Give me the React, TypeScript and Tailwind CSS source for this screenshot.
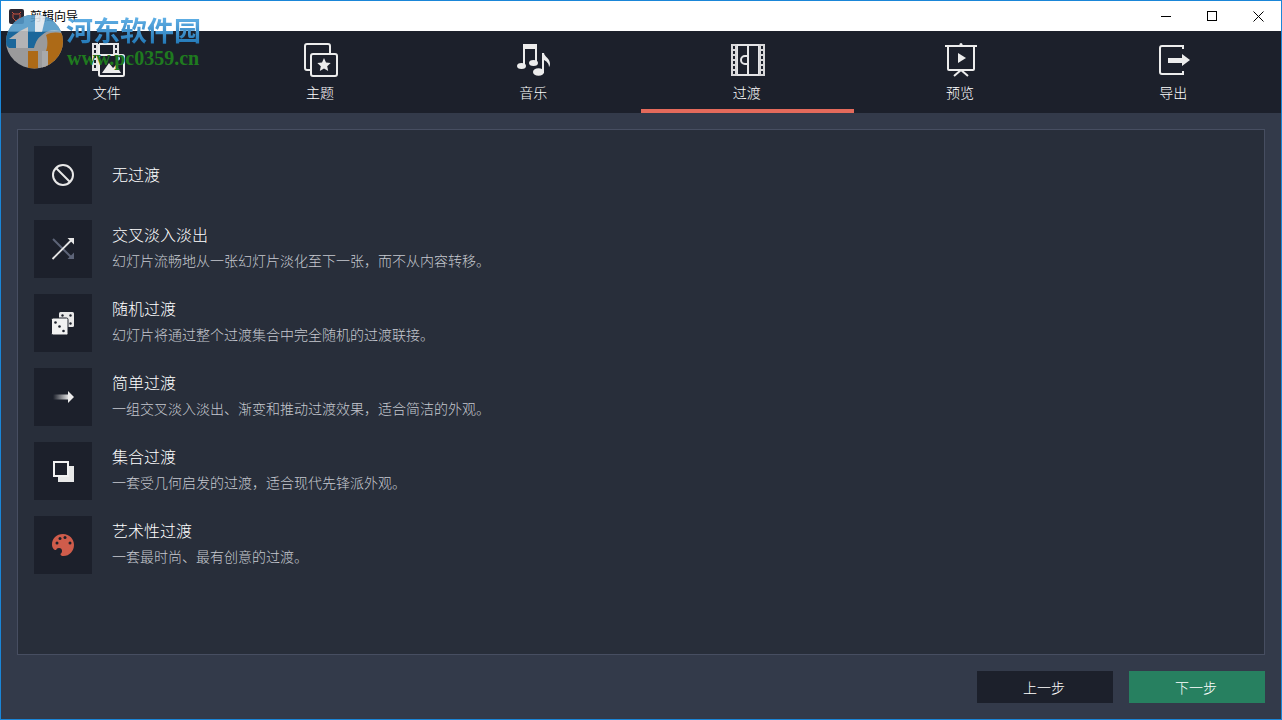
import React from "react";

const cjk = { fontFamily: '"Noto Sans CJK SC", "Liberation Sans", sans-serif' };

function FileIcon() {
  return (
    <svg width="34" height="34" viewBox="0 0 34 34" fill="none">
      <path d="M8 1h19v12M8 1v26" stroke="#ececec" strokeWidth="2" />
      <rect x="1" y="0" width="6" height="28" fill="#e4e4e6" />
      <path d="M3 2h2v3H3zM3 7h2v3H3zM3 12h2v3H3zM3 17h2v3H3zM3 22h2v3H3z" fill="#1c202b" />
      <rect x="22" y="0" width="6" height="11" fill="#e4e4e6" />
      <path d="M24 2h2v3h-2zM24 7h2v3h-2z" fill="#1c202b" />
      <rect x="8" y="12" width="25" height="21" rx="1.500" fill="#1c202b" stroke="#ececec" strokeWidth="2" />
      <path d="M11 30l7-10 4 5 3-3 5 8z" fill="#ececec" />
      <circle cx="27" cy="15.500" r="2" fill="#ececec" />
    </svg>
  );
}

function ThemeIcon() {
  return (
    <svg width="34" height="34" viewBox="0 0 34 34" fill="none" stroke="#ececec" strokeWidth="2">
      <path d="M7 27H3a2 2 0 0 1-2-2V3a2 2 0 0 1 2-2h21a2 2 0 0 1 2 2v7" />
      <rect x="7" y="11" width="26" height="22" rx="2" fill="#1c202b" />
      <path d="M20 15l2 4.400 4.700.6-3.500 3.200 1 4.800-4.200-2.400-4.200 2.400 1-4.800-3.500-3.200 4.700-.6z" fill="#ececec" stroke="none" />
    </svg>
  );
}

function MusicIcon() {
  return (
    <svg width="34" height="34" viewBox="0 0 34 34" fill="#ececec">
      <path d="M6 1h14v19h-2V6H8v18H6z" />
      <ellipse cx="4.500" cy="23" rx="4.500" ry="3" />
      <ellipse cx="16.500" cy="20" rx="4.500" ry="3" />
      <path d="M25 10h2c.5 4 6 5 6 11 0 1-.5 2.500-1 3 0-4-3-6-5-7v13h-2z" />
      <ellipse cx="21.500" cy="29" rx="5.500" ry="3.800" />
    </svg>
  );
}

function TransitionIcon() {
  return (
    <svg width="34" height="34" viewBox="0 0 34 34" fill="none">
      <path d="M6 2h22v30H6z" stroke="#e4e4e6" strokeWidth="2" />
      <rect x="0" y="1" width="6" height="32" fill="#d8d8da" />
      <rect x="28" y="1" width="6" height="32" fill="#d8d8da" />
      <path
        d="M2 3h2v3H2zM2 8h2v3H2zM2 13h2v3H2zM2 18h2v3H2zM2 23h2v3H2zM2 28h2v3H2zM30 3h2v3h-2zM30 8h2v3h-2zM30 13h2v3h-2zM30 18h2v3h-2zM30 23h2v3h-2zM30 28h2v3h-2z"
        fill="#1c202b"
      />
      <path d="M17 2v30" stroke="#e4e4e6" strokeWidth="2" />
      <path d="M16 13h-2a4 4 0 0 0 0 8h2" stroke="#e4e4e6" strokeWidth="2" />
    </svg>
  );
}

function PreviewIcon() {
  return (
    <svg width="34" height="34" viewBox="0 0 34 34" fill="none" stroke="#ececec" strokeWidth="2">
      <path d="M1 3h32" />
      <path d="M4 3v23a1 1 0 0 0 1 1h24a1 1 0 0 0 1-1V3" />
      <circle cx="17" cy="1.500" r="1.500" fill="#ececec" stroke="none" />
      <path d="M14 10l8 5-8 5z" fill="#ececec" stroke="none" />
      <path d="M17 27l-7 6M17 27l7 6" />
    </svg>
  );
}

function ExportIcon() {
  return (
    <svg width="34" height="34" viewBox="0 0 34 34" fill="none" stroke="#ececec" strokeWidth="2">
      <path d="M27 3H5a2 2 0 0 0-2 2v24a2 2 0 0 0 2 2h22" />
      <path d="M26 3v3M26 28v3" />
      <path d="M11 15h14v-4l8 6-8 6v-3H11z" fill="#ececec" stroke="none" />
    </svg>
  );
}

function BlockIcon() {
  return (
    <svg width="24" height="24" viewBox="0 0 24 24" fill="none" stroke="#e8e8e8" strokeWidth="2">
      <circle cx="12" cy="12" r="10" />
      <path d="M5 5l14 14" />
    </svg>
  );
}

function CrossIcon() {
  return (
    <svg width="24" height="24" viewBox="0 0 24 24" fill="none">
      <path d="M2 2l18 18" stroke="#5d6478" strokeWidth="2" />
      <path d="M23 22h-6.500l6.500-6.500z" fill="#5d6478" />
      <path d="M1.500 22L21 2.500" stroke="#e6e6e6" strokeWidth="1.800" />
      <path d="M23 1h-6.500l6.500 6.500z" fill="#e6e6e6" />
    </svg>
  );
}

function DiceIcon() {
  return (
    <svg width="24" height="24" viewBox="0 0 24 24">
      <rect x="8" y="1" width="15" height="15" rx="1.500" fill="#e8e8e8" />
      <circle cx="11.500" cy="4.500" r="1.200" fill="#1c202b" />
      <circle cx="19.500" cy="4.500" r="1.200" fill="#1c202b" />
      <circle cx="19.500" cy="12.500" r="1.200" fill="#1c202b" />
      <rect x="0.500" y="7" width="16.500" height="17" rx="1.500" fill="#f2f2f2" stroke="#1c202b" strokeWidth="1" />
      <circle cx="4.500" cy="11.500" r="1.300" fill="#1c202b" />
      <circle cx="8.500" cy="15.500" r="1.300" fill="#1c202b" />
      <circle cx="12.500" cy="20" r="1.300" fill="#1c202b" />
    </svg>
  );
}

function ArrowIcon() {
  return (
    <svg width="24" height="24" viewBox="0 0 24 24">
      <defs>
        <linearGradient id="fade" x1="0" x2="1" y1="0" y2="0">
          <stop offset="0" stopColor="#e8e8e8" stopOpacity="0" />
          <stop offset="1" stopColor="#e8e8e8" />
        </linearGradient>
      </defs>
      <rect x="2" y="9.500" width="16" height="5" fill="url(#fade)" />
      <path d="M17 6l6 6-6 6z" fill="#ececec" />
    </svg>
  );
}

function StackIcon() {
  return (
    <svg width="24" height="24" viewBox="0 0 24 24">
      <path d="M7 7h16v16H7z" fill="#e8e8e8" />
      <rect x="3" y="3" width="14" height="14" fill="#1c202b" stroke="#f2f2f2" strokeWidth="2" />
    </svg>
  );
}

function PaletteIcon() {
  return (
    <svg width="24" height="24" viewBox="0 0 24 24">
      <path
        d="M12 1C5.500 1 1 5.500 1 11.500 1 15 3 17 5 17s3-.5 4 .5.500 2 .5 3.500 1 2 3 2c6 0 10.500-5 10.500-11S18.500 1 12 1z"
        fill="#cf5c4b"
      />
      <circle cx="6" cy="10" r="1.500" fill="#1c202b" />
      <circle cx="9" cy="5.500" r="1.500" fill="#1c202b" />
      <circle cx="14" cy="4.500" r="1.500" fill="#1c202b" />
      <circle cx="19" cy="10" r="1.500" fill="#1c202b" />
      <circle cx="8" cy="18" r="3" fill="#1c202b" />
    </svg>
  );
}

function Watermark() {
  return (
    <div className="absolute left-0 top-0 pointer-events-none">
      <svg className="absolute left-[5px] top-[14px] opacity-90" width="58" height="54" viewBox="0 0 58 54">
        <defs>
          <clipPath id="logoClip">
            <ellipse cx="28.500" cy="26.500" rx="28.500" ry="27" />
          </clipPath>
        </defs>
        <g clipPath="url(#logoClip)">
          <rect width="58" height="54" fill="#a8a8a8" />
          <path d="M0 0h58v18c-8-5-16-3-22 2-4 3-6 6-8 13H3L0 30z" fill="#1b6fa8" />
          <path d="M0 0h58v17H0z" fill="#7fb9e0" opacity="0.55" />
          <path d="M3 24l11-8 8-4v21H10v-9z" fill="#c4c4c4" />
          <path d="M29 0h11l-4 17h-7z" fill="#dfe7ee" />
          <path d="M40 20c6-3 11-3 18-1v35H38l1-16c3-5 3-13 1-18z" fill="#bd7315" />
          <path d="M22 36h10v18H22z" fill="#bd7315" />
          <path d="M36 36h6v18h-6z" fill="#b8b8b8" />
        </g>
      </svg>
      <div
        className="absolute left-[65px] top-[11px] text-[27px] leading-[36px] font-bold whitespace-nowrap bg-linear-to-b from-[#6dbcf0] to-[#1470b0] bg-clip-text text-transparent"
        style={{ fontFamily: '"Noto Sans CJK SC", serif' }}
      >
        河东软件园
      </div>
      <div
        className="absolute left-[66px] top-[47px] text-[20px] leading-[20px] font-bold text-[#1f7a1f] whitespace-nowrap"
        style={{ fontFamily: '"Liberation Serif", serif' }}
      >
        www.pc0359.cn
      </div>
    </div>
  );
}

const tabs = [
  { label: "文件", icon: <FileIcon /> },
  { label: "主题", icon: <ThemeIcon /> },
  { label: "音乐", icon: <MusicIcon /> },
  { label: "过渡", icon: <TransitionIcon />, active: true },
  { label: "预览", icon: <PreviewIcon /> },
  { label: "导出", icon: <ExportIcon /> },
];

const rows = [
  { title: "无过渡", desc: "", icon: <BlockIcon /> },
  { title: "交叉淡入淡出", desc: "幻灯片流畅地从一张幻灯片淡化至下一张，而不从内容转移。", icon: <CrossIcon /> },
  { title: "随机过渡", desc: "幻灯片将通过整个过渡集合中完全随机的过渡联接。", icon: <DiceIcon /> },
  { title: "简单过渡", desc: "一组交叉淡入淡出、渐变和推动过渡效果，适合简洁的外观。", icon: <ArrowIcon /> },
  { title: "集合过渡", desc: "一套受几何启发的过渡，适合现代先锋派外观。", icon: <StackIcon /> },
  { title: "艺术性过渡", desc: "一套最时尚、最有创意的过渡。", icon: <PaletteIcon /> },
];

export default function App() {
  return (
    <div className="relative w-[1282px] h-[720px] flex flex-col overflow-hidden border border-[#1a86d8] bg-[#333a4a]" style={cjk}>
      {/* title bar */}
      <div className="h-[30px] shrink-0 bg-white flex items-center pl-[8px]">
        <div className="w-[15px] h-[15px] rounded-[2px] bg-[#2a2530] flex items-center justify-center">
          <svg width="11" height="11" viewBox="0 0 11 11" fill="none" stroke="#c8503f" strokeWidth="1">
            <path d="M1 1l2 2h5l2-2M2 3v4l3 3 4-3V3" />
          </svg>
        </div>
        <span className="ml-[6px] text-[12px] leading-none text-black">剪辑向导</span>
        <div className="ml-auto flex items-center h-full">
          <div className="w-[46px] h-full flex items-center justify-center">
            <div className="w-[10px] h-[1px] bg-black" />
          </div>
          <div className="w-[46px] h-full flex items-center justify-center">
            <div className="w-[10px] h-[10px] border border-black" />
          </div>
          <div className="w-[46px] h-full flex items-center justify-center">
            <svg width="11" height="11" viewBox="0 0 11 11" stroke="#000" strokeWidth="1">
              <path d="M.5.5l10 10M10.500.5l-10 10" />
            </svg>
          </div>
        </div>
      </div>

      {/* tabs */}
      <div className="h-[82px] shrink-0 bg-[#1c202b] grid grid-cols-6">
        {tabs.map((t) => (
          <div
            key={t.label}
            className={`flex flex-col items-center pt-[12px] border-b-4 ${t.active ? "border-[#e46a5b]" : "border-transparent"}`}
          >
            <div className="h-[34px]">{t.icon}</div>
            <span className="mt-[5px] pr-[2px] text-[14px] font-light leading-[20px] text-white">{t.label}</span>
          </div>
        ))}
      </div>

      {/* body */}
      <div className="flex-1 flex flex-col px-[16px] pt-[16px] pb-[16px]">
        <div className="h-[526px] border border-[#474e61] bg-[#282e3a] pt-[16px] pl-[16px] flex flex-col gap-[16px]">
          {rows.map((r) => (
            <div key={r.title} className="flex items-center gap-[20px] h-[58px]">
              <div className="w-[58px] h-[58px] bg-[#1c202b] flex items-center justify-center">{r.icon}</div>
              <div className={`flex flex-col gap-[5px] ${r.desc ? "pb-[4px]" : "pb-[2px]"}`}>
                <span className="text-[16px] font-light leading-[21px] text-white">{r.title}</span>
                {r.desc && <span className="text-[14px] font-light leading-[21px] text-[#c6c9d0]">{r.desc}</span>}
              </div>
            </div>
          ))}
        </div>
        <div className="mt-[16px] flex justify-end gap-[16px]">
          <button className="w-[136px] h-[32px] pr-[2px] bg-[#1c202b] text-white font-light text-[14px]">上一步</button>
          <button className="w-[136px] h-[32px] pr-[2px] bg-[#278060] text-white font-light text-[14px]">下一步</button>
        </div>
      </div>

      <Watermark />
    </div>
  );
}
